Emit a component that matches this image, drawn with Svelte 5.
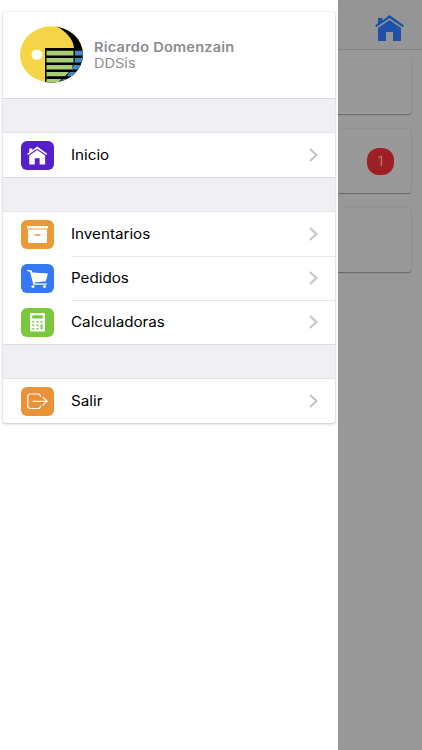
<script>
  const groups = [
    [{ title: 'Inicio', icon: 'home', color: '#5520cc' }],
    [
      { title: 'Inventarios', icon: 'box', color: '#eb9a38' },
      { title: 'Pedidos', icon: 'cart', color: '#3478f3' },
      { title: 'Calculadoras', icon: 'calculator', color: '#7cc83c' }
    ],
    [{ title: 'Salir', icon: 'exit', color: '#eb9236' }]
  ]

  const pageCards = [
    { size: 'small', count: null },
    { size: 'large', count: 1 },
    { size: 'large', count: null }
  ]
</script>

{#snippet house()}
  <path d="M3 3h4.500v2.500L14.500 0 29 10.500l-1.200 1.700L14.500 3.200 1.200 12.200 0 10.500l3-2.200z" />
  <path d="M3 13 14.500 5 26 13V26h-8v-9h-7v9H3z" />
{/snippet}

<div class="screen">
  <div class="page">
    <header class="navbar">
      <svg class="nav-home" viewBox="0 0 29 27">{@render house()}</svg>
    </header>
    {#each pageCards as card}
      <div class="page-card {card.size}">
        {#if card.count}
          <span class="badge">{card.count}</span>
        {/if}
      </div>
    {/each}
  </div>

  <aside class="menu">
    <div class="card">
      <div class="profile">
        <svg class="avatar" viewBox="0 0 63 57">
          <clipPath id="face"><ellipse cx="31.5" cy="28.500" rx="31.500" ry="28.200" /></clipPath>
          <g clip-path="url(#face)">
            <path fill="#f5d547" d="M0 0h63v57H0z" />
            <path fill="#000" d="M36 0C47 6 53 13 54 22H25v35h38V0z" />
            <path fill="#a9cc76" d="M26.500 24.700h27v4.800h-27zM26.500 32h27v4.600h-27zM26.500 39h26v4.500h-26zM26.500 46h22.500l-4 4.300H26.500zM26.500 53h15L38 57H26.500z" />
            <path fill="#438ac3" d="M55 24.700h8v4.800h-8zM55 32h8v4.600h-8.500zM53.500 39H63v4.500H51.500zM50 46h13v4.300H46.500zM43 53h10v4H39z" />
            <ellipse fill="#fff" cx="17" cy="28.800" rx="5.500" ry="5.100" />
          </g>
        </svg>
        <div>
          <div class="name">Ricardo Domenzain</div>
          <div class="company">DDSis</div>
        </div>
      </div>

      {#each groups as group}
        <div class="divider"></div>
        {#each group as item}
          <div class="item">
            <span class="tile" style="background: {item.color}">
              <svg viewBox="0 0 33 29">
                {#if item.icon == 'home'}
                  <g transform="translate(6.200 5.500) scale(.69)">{@render house()}</g>
                {:else if item.icon == 'box'}
                  <path d="M6 6h21v2.500H6z" />
                  <path fill-rule="evenodd" d="M7 9.500h19V22q0 1-1 1H8q-1 0-1-1zM13.500 14.300v1.400h6v-1.400z" />
                {:else if item.icon == 'cart'}
                  <path d="M6 5.700l4.600.9 1 2 15.400 1-2.200 7.700-11.300 1.300.3 1h12v1.200H12.400L9 7.800l-3-.7z" />
                  <ellipse cx="12" cy="22.600" rx="1.600" ry="1.400" />
                  <ellipse cx="23.500" cy="22.600" rx="1.600" ry="1.400" />
                {:else if item.icon == 'calculator'}
                  <path fill-rule="evenodd" d="M10 5h13q1 0 1 1v16.500q0 1-1 1H10q-1 0-1-1V6q0-1 1-1zM11.200 7.300v3.200h10.600V7.300zM11.300 12.900v1.500h1.900v-1.500zM15.500 12.900v1.500h1.900v-1.500zM19.600 12.900v1.500h1.900v-1.500zM11.300 16.500V18h1.900v-1.500zM15.500 16.500V18h1.900v-1.500zM19.600 16.500v5h1.900v-5zM11.300 20v1.500h1.900V20zM15.500 20v1.500h1.900V20z" />
                {:else}
                  <path class="line" d="M19.500 10V8.500L18 7H8.500L6.800 8.500v11.500L8.500 21.500H18l1.500-1.500V18.500M11.500 14.300h14.500M21.500 10l4.800 4.300-4.800 4.300" />
                {/if}
              </svg>
            </span>
            <div class="label">
              <span class="title">{item.title}</span>
              <svg class="chevron" viewBox="0 0 9 14"><path d="M1 1l6.500 6L1 13" /></svg>
            </div>
          </div>
        {/each}
      {/each}
    </div>
  </aside>
</div>

<style>
  :global(body) {
    background: #999;
  }

  .screen {
    position: relative;
    height: 750px;
    overflow: hidden;
    font-family: Inter, "Liberation Sans", sans-serif;
  }

  .page {
    height: 100%;
    background: #989898;
  }

  .navbar {
    display: flex;
    justify-content: flex-end;
    box-sizing: border-box;
    height: 50px;
    padding: 15px 18px 0 0;
    margin-bottom: 10px;
    background: #959595;
    border-bottom: 1px solid #828282;
  }

  .nav-home {
    width: 29px;
    height: 27px;
    fill: #1e50a8;
  }

  .page-card {
    display: flex;
    align-items: center;
    justify-content: flex-end;
    box-sizing: border-box;
    margin: 0 11px 15px;
    padding-right: 17px;
    border-radius: 2px;
    background: #999;
    box-shadow: 0 1px 1px rgba(0, 0, 0, 0.3), 0 0 1px rgba(0, 0, 0, 0.3);
  }

  .small {
    height: 54px;
  }

  .large {
    height: 64px;
  }

  .large:last-child {
    margin-top: 15px;
  }

  .badge {
    width: 27px;
    height: 27px;
    border-radius: 12px;
    background: #9c2024;
    color: #bd9a9a;
    font-size: 13px;
    font-weight: 300;
    line-height: 27px;
    text-align: center;
  }

  .menu {
    position: absolute;
    top: 0;
    left: 0;
    box-sizing: border-box;
    width: 338px;
    height: 100%;
    padding: 12px 3px;
    background: #fff;
  }

  .card {
    border-radius: 2px;
    overflow: hidden;
    box-shadow: 0 1px 3px rgba(0, 0, 0, 0.22), 0 0 1px rgba(0, 0, 0, 0.25);
  }

  .profile {
    display: flex;
    align-items: center;
    gap: 11px;
    box-sizing: border-box;
    height: 86px;
    padding: 0 0 1px 17px;
    color: #8b8c90;
    font-size: 13px;
    line-height: 16px;
  }

  .avatar {
    width: 63px;
    height: 57px;
  }

  .name,
  .company,
  .title {
    transform-origin: left center;
  }

  .name {
    font-weight: 600;
    letter-spacing: 0.2px;
    transform: scaleX(1.12);
  }

  .company {
    transform: scaleX(1.12);
  }

  .title {
    margin-bottom: 2px;
    transform: scaleX(1.085);
  }

  .divider {
    box-sizing: border-box;
    height: 35px;
    background: #efeff4;
    border-top: 1px solid #dadade;
    border-bottom: 1px solid #e4e4e8;
  }

  .item {
    display: flex;
    align-items: center;
    height: 44px;
    padding-left: 18px;
  }

  .tile {
    width: 33px;
    height: 29px;
    margin-right: 17px;
    border-radius: 6px;
  }

  .tile svg {
    display: block;
    fill: #fff;
  }

  .tile .line {
    fill: none;
    stroke: #fff;
    stroke-width: 1.2;
  }

  .label {
    display: flex;
    flex: 1;
    align-items: center;
    justify-content: space-between;
    box-sizing: border-box;
    height: 44px;
    padding-right: 17px;
    color: #000;
    font-size: 14px;
  }

  .item + .item .label {
    border-top: 1px solid #e6e6e8;
    padding-bottom: 1px;
  }

  .chevron {
    width: 9px;
    height: 14px;
    fill: none;
    stroke: #c3c3c7;
    stroke-width: 2;
  }
</style>
